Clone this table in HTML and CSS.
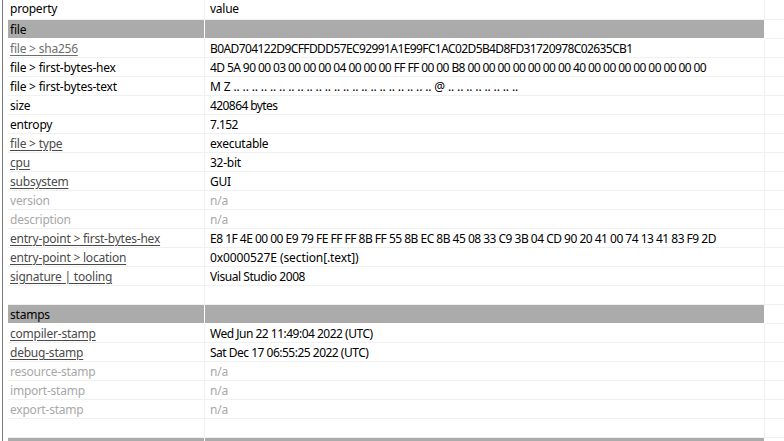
FILE: index.html
```html
<!DOCTYPE html>
<html>
<head>
<meta charset="utf-8">
<link rel="stylesheet" href="styles.css">
</head>
<body>
<div class="frame">
  <div class="grid">
    <div class="row head"><div class="c p">property</div><div class="c v">value</div><div class="c f"></div></div>
    <div class="row group"><div class="c p">file</div><div class="c v"></div><div class="c f"></div></div>
    <div class="row"><div class="c p"><span class="lnk light">file &gt; sha256</span></div><div class="c v sha">B0AD704122D9CFFDDD57EC92991A1E99FC1AC02D5B4D8FD31720978C02635CB1</div><div class="c f"></div></div>
    <div class="row"><div class="c p">file &gt; first-bytes-hex</div><div class="c v hex">4D 5A 90 00 03 00 00 00 04 00 00 00 FF FF 00 00 B8 00 00 00 00 00 00 00 40 00 00 00 00 00 00 00 00</div><div class="c f"></div></div>
    <div class="row"><div class="c p">file &gt; first-bytes-text</div><div class="c v dots">M Z .. .. .. .. .. .. .. .. .. .. .. .. .. .. .. .. .. .. .. .. .. .. @ .. .. .. .. .. .. .. ..</div><div class="c f"></div></div>
    <div class="row"><div class="c p">size</div><div class="c v num">420864 bytes</div><div class="c f"></div></div>
    <div class="row"><div class="c p">entropy</div><div class="c v num">7.152</div><div class="c f"></div></div>
    <div class="row"><div class="c p"><span class="lnk">file &gt; type</span></div><div class="c v">executable</div><div class="c f"></div></div>
    <div class="row"><div class="c p"><span class="lnk">cpu</span></div><div class="c v">32-bit</div><div class="c f"></div></div>
    <div class="row"><div class="c p"><span class="lnk">subsystem</span></div><div class="c v">GUI</div><div class="c f"></div></div>
    <div class="row dim"><div class="c p">version</div><div class="c v">n/a</div><div class="c f"></div></div>
    <div class="row dim"><div class="c p">description</div><div class="c v">n/a</div><div class="c f"></div></div>
    <div class="row"><div class="c p"><span class="lnk">entry-point &gt; first-bytes-hex</span></div><div class="c v hex2">E8 1F 4E 00 00 E9 79 FE FF FF 8B FF 55 8B EC 8B 45 08 33 C9 3B 04 CD 90 20 41 00 74 13 41 83 F9 2D</div><div class="c f"></div></div>
    <div class="row"><div class="c p"><span class="lnk">entry-point &gt; location</span></div><div class="c v loc">0x0000527E (section[.text])</div><div class="c f"></div></div>
    <div class="row"><div class="c p"><span class="lnk">signature | tooling</span></div><div class="c v mid">Visual Studio 2008</div><div class="c f"></div></div>
    <div class="row"><div class="c p"></div><div class="c v"></div><div class="c f"></div></div>
    <div class="row group"><div class="c p">stamps</div><div class="c v"></div><div class="c f"></div></div>
    <div class="row"><div class="c p"><span class="lnk">compiler-stamp</span></div><div class="c v date">Wed Jun 22 11:49:04 2022 (UTC)</div><div class="c f"></div></div>
    <div class="row"><div class="c p"><span class="lnk">debug-stamp</span></div><div class="c v date">Sat Dec 17 06:55:25 2022 (UTC)</div><div class="c f"></div></div>
    <div class="row dim"><div class="c p">resource-stamp</div><div class="c v">n/a</div><div class="c f"></div></div>
    <div class="row dim"><div class="c p">import-stamp</div><div class="c v">n/a</div><div class="c f"></div></div>
    <div class="row dim"><div class="c p">export-stamp</div><div class="c v">n/a</div><div class="c f"></div></div>
    <div class="row"><div class="c p"></div><div class="c v"></div><div class="c f"></div></div>
    <div class="row group"><div class="c p">&nbsp;</div><div class="c v"></div><div class="c f"></div></div>
  </div>
</div>
</body>
</html>
```

FILE: styles.css
```css
html, body {
  margin: 0;
  padding: 0;
  background: #ffffff;
  overflow: hidden;
  height: 441px;
}
body {
  padding-left: 2px;
  font-family: "Noto Sans", "Open Sans", sans-serif;
  font-size: 12px;
  color: #000000;
}
.frame {
  border-left: 1px solid #7a7a7a;
  padding-left: 5px;
  height: 441px;
}
.grid {
  display: flex;
  flex-direction: column;
}
.row {
  display: grid;
  grid-template-columns: 197px 560px 1fr;
  height: 19px;
}
.row.head {
  height: 20px;
}
.c {
  box-sizing: border-box;
  border-right: 1px solid #f0f0f0;
  border-bottom: 1px solid #f0f0f0;
  padding-left: 2px;
  line-height: 19px;
  white-space: nowrap;
  overflow: hidden;
  letter-spacing: -0.22px;
}
.c.v {
  padding-left: 5px;
  letter-spacing: -0.25px;
}
.c.v.sha {
  letter-spacing: -0.6px;
}
.c.v.hex {
  letter-spacing: -0.59px;
}
.c.v.hex2 {
  letter-spacing: -0.51px;
}
.c.v.dots {
  letter-spacing: -0.14px;
}
.c.v.num {
  letter-spacing: -0.58px;
}
.c.v.mid {
  letter-spacing: -0.45px;
}
.c.v.loc {
  letter-spacing: -0.1px;
}
.c.v.date {
  letter-spacing: -0.5px;
}
.c.f {
  border-right: none;
}
.head .c {
  line-height: 17px;
}
.group .c.p, .group .c.v {
  background: #ababab;
  border-right-color: #ffffff;
  border-bottom-color: #ffffff;
}
.group .c.f {
  border-bottom-color: #f0f0f0;
}
.lnk {
  text-decoration: underline;
  text-underline-offset: 2px;
  color: #4a4a4a;
}
.lnk.light {
  color: #6e6e6e;
}
.dim .c {
  color: #a8a8a8;
}
```
